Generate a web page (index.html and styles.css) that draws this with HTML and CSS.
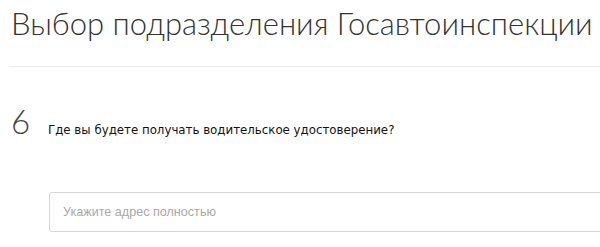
FILE: index.html
```html
<!DOCTYPE html>
<html lang="ru">
<head>
<meta charset="utf-8">
<title>Выбор подразделения Госавтоинспекции</title>
<link rel="stylesheet" href="styles.css">
</head>
<body>
<div class="page">
  <header class="head">
    <h1 class="title">Выбор подразделения Госавтоинспекции</h1>
  </header>
  <section class="step">
    <div class="step-row">
      <span class="step-num">6</span>
      <span class="step-q">Где вы будете получать водительское удостоверение?</span>
    </div>
    <div class="field">
      <input class="addr" type="text" placeholder="Укажите адрес полностью">
    </div>
  </section>
</div>
</body>
</html>
```
FILE: styles.css
```css
html, body {
  margin: 0;
  padding: 0;
  background: #fff;
  overflow: hidden;
}
.page {
  width: 600px;
  height: 247px;
  padding-left: 10px;
  box-sizing: border-box;
}
.head {
  height: 67px;
  border-bottom: 1px solid #ebebeb;
  box-sizing: border-box;
}
.title {
  margin: 0;
  padding-top: 3px;
  padding-left: 1px;
  font-family: "Lato", sans-serif;
  font-weight: 300;
  font-size: 31px;
  line-height: 40px;
  color: #333;
  white-space: nowrap;
}
.step {
  padding-top: 42px;
}
.step-row {
  display: flex;
  align-items: flex-start;
  height: 30px;
}
.step-num {
  width: 38px;
  margin-top: -3px;
  padding-left: 1px;
  box-sizing: border-box;
  font-family: "Lato", sans-serif;
  font-weight: 300;
  font-size: 33px;
  line-height: 30px;
  color: #444;
}
.step-q {
  font-family: "DejaVu Sans", sans-serif;
  font-size: 11.8px;
  line-height: 14px;
  color: #111;
  padding-top: 14px;
}
.field {
  padding-top: 53px;
  padding-left: 39px;
}
.addr {
  display: block;
  width: 600px;
  height: 40px;
  box-sizing: border-box;
  border: 1px solid #d6d6d6;
  border-radius: 3px;
  padding: 0 13px;
  font-family: "Liberation Sans", Arial, sans-serif;
  font-size: 12.6px;
  color: #333;
  outline: none;
}
.addr::placeholder {
  color: #a8a8a8;
}
```
